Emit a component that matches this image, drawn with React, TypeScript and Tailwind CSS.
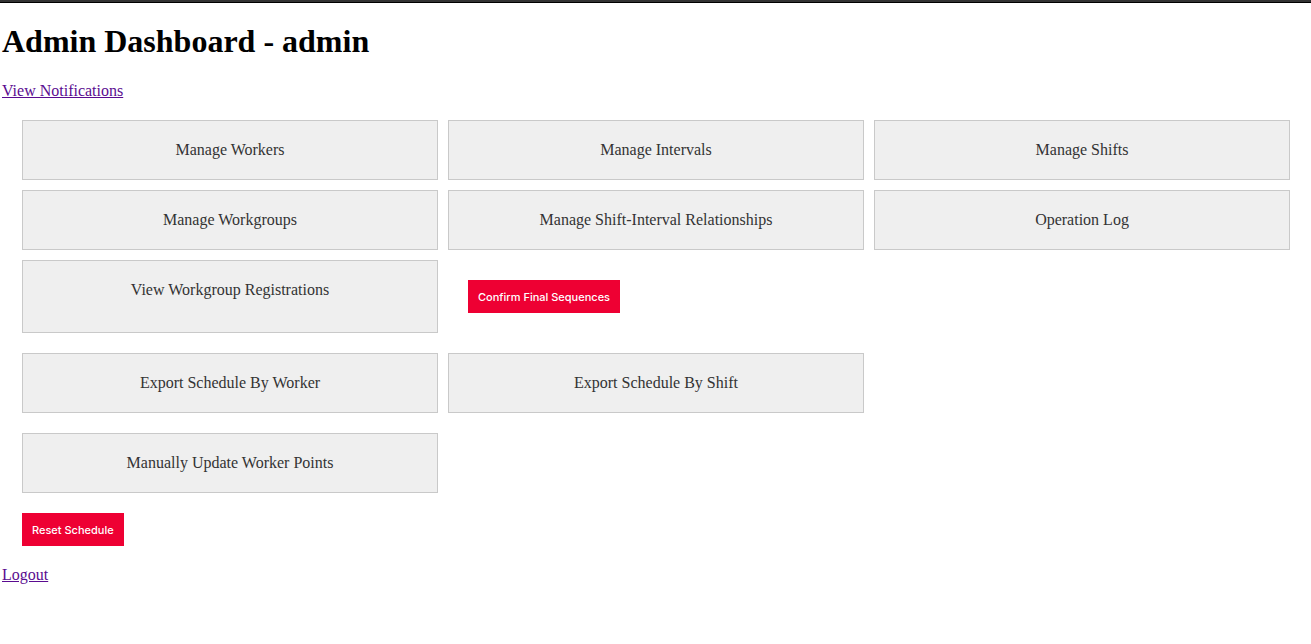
import React from "react";

const links = [
  "Manage Workers",
  "Manage Intervals",
  "Manage Shifts",
  "Manage Workgroups",
  "Manage Shift-Interval Relationships",
  "Operation Log",
  "View Workgroup Registrations",
];

const exportLinks = ["Export Schedule By Worker", "Export Schedule By Shift"];

function Tile({ label }: { label: string }) {
  return (
    <a href="#" className="border border-[#c9c9c9] bg-[#efefef] p-5 text-center text-[#333]">
      {label}
    </a>
  );
}

function DangerButton({ label }: { label: string }) {
  return (
    <button
      type="button"
      className="bg-[#ee0033] px-2.5 pt-[11px] pb-[9px] font-['Inter','Liberation_Sans',sans-serif] text-[11px] leading-[13px] font-medium text-white"
    >
      {label}
    </button>
  );
}

export default function App() {
  return (
    <div className="border-t-2 border-[#333] bg-white font-['Liberation_Serif',serif] text-base leading-[18px] text-black">
      <main className="border-t border-black pt-5 pr-px pl-0.5">
        <h1 className="mb-[23px] text-[32px] leading-9 font-bold">Admin Dashboard - admin</h1>
        <a href="#" className="text-[#5a0b90] underline">
          View Notifications
        </a>
        <div className="flex flex-col gap-5 p-5">
          <div className="grid grid-cols-3 gap-2.5">
            {links.map((label) => (
              <Tile key={label} label={label} />
            ))}
            <form className="p-5" onSubmit={(e) => e.preventDefault()}>
              <DangerButton label="Confirm Final Sequences" />
            </form>
          </div>
          <div className="grid grid-cols-3 gap-2.5">
            {exportLinks.map((label) => (
              <Tile key={label} label={label} />
            ))}
          </div>
          <div className="grid grid-cols-3 gap-2.5">
            <Tile label="Manually Update Worker Points" />
          </div>
          <form className="flex" onSubmit={(e) => e.preventDefault()}>
            <DangerButton label="Reset Schedule" />
          </form>
        </div>
        <a href="#" className="text-[#5a0b90] underline">
          Logout
        </a>
      </main>
    </div>
  );
}
